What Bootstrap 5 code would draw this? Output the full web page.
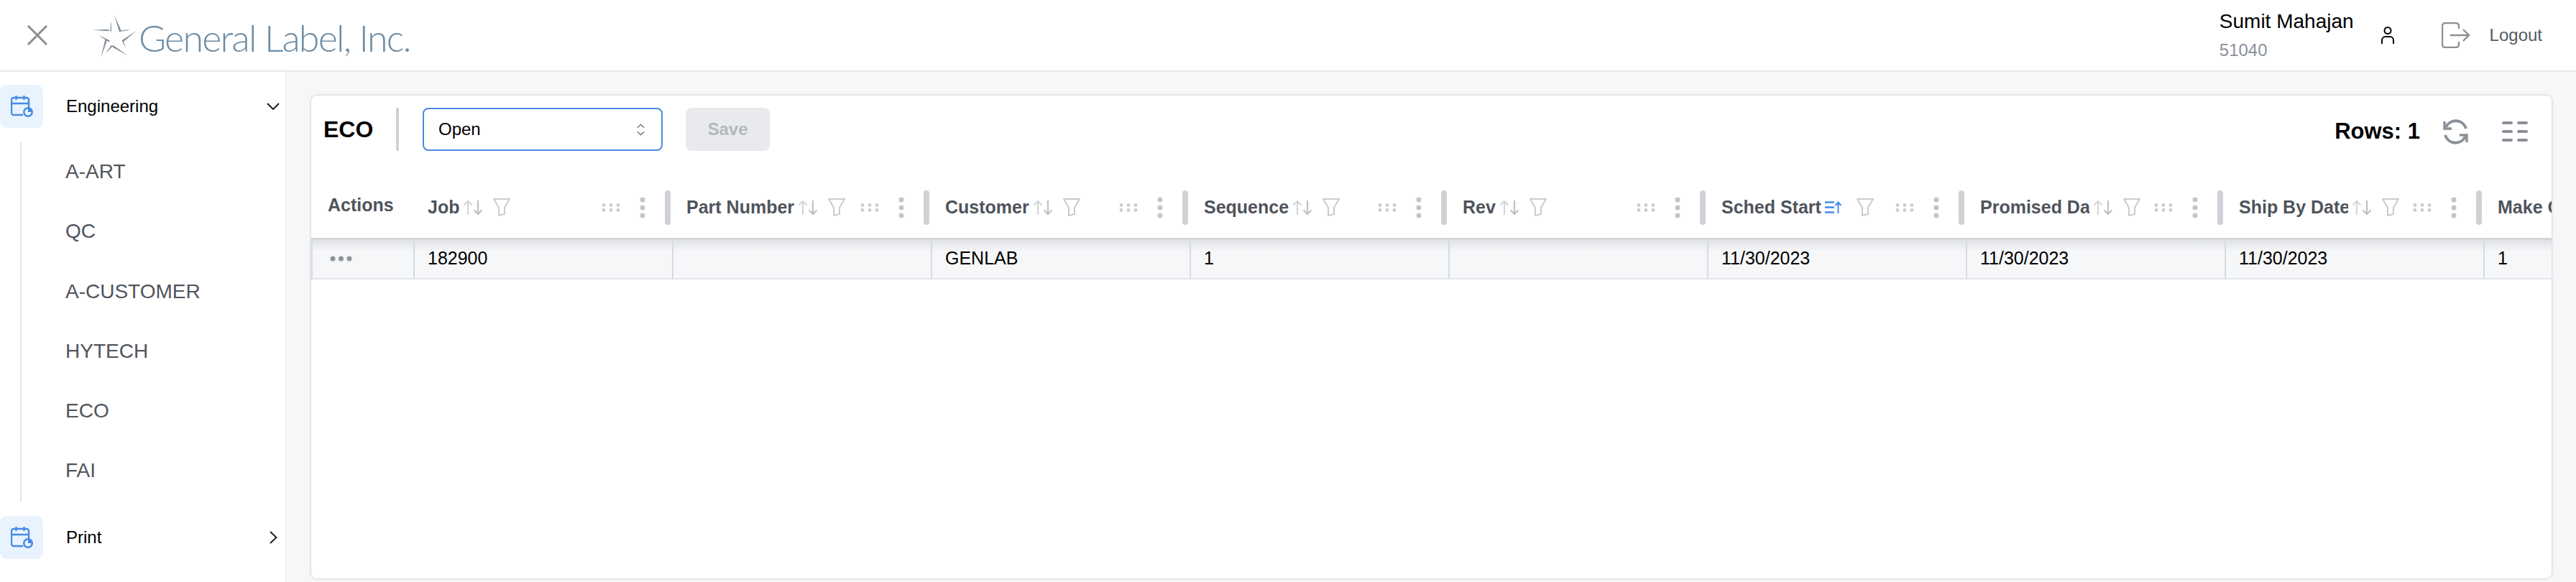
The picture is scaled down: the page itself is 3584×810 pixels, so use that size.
<!DOCTYPE html>
<html lang="en">
<head>
  <meta charset="UTF-8" />
  <title>ECO</title>
  <link href="https://cdn.jsdelivr.net/npm/bootstrap@5.3.3/dist/css/bootstrap.min.css" rel="stylesheet"/>
  <style>
    html, body { height: 810px; overflow: hidden; }
    body { font-family: "Liberation Sans", Arial, sans-serif; color: #000; background: #f6f7f9; }
    svg { display: block; flex: none; }
    .icon-defs { position: absolute; width: 0; height: 0; }

    .top-bar { height: 100px; background: #fff; border-bottom: 2px solid #e6eaee; padding: 0 47px 0 38px; }
    .logo-name { font-family: Lato, "Open Sans", sans-serif; font-weight: 300; font-size: 52px; line-height: 1; color: #6b8ca6; letter-spacing: -1.8px; margin: 5px 0 0 3px; white-space: nowrap; }
    .logo-star { margin-left: 62px; }
    .user-box { margin-right: 30px; }
    .user-name { font-size: 28px; line-height: 32px; }
    .user-id { font-size: 24px; line-height: 28px; color: #8b9199; margin-top: 10px; }
    .logout-icon { margin-left: 66px; }
    .logout-text { font-size: 24px; color: #555b63; margin-left: 27px; }

    .main-row { height: 710px; }
    .side-menu { width: 399px; background: #fff; border-right: 2px solid #eef0f3; padding-top: 18px; }
    .menu-head { height: 60px; font-size: 24px; padding-right: 8px; }
    .menu-tile { width: 60px; height: 60px; background: #e9f3fd; border-radius: 9px; margin-right: 32px; }
    .print-arrow { margin-right: 3px; }
    .menu-sub { margin: 20px 0 20px 28px; border-left: 2px solid #e2e5e9; height: 500px; padding-left: 61px; }
    .menu-sub a { display: block; height: 83.3px; line-height: 82px; font-size: 28px; color: #50555d; text-decoration: none; }

    .page-body { padding: 33px 34px 5px 34px; min-width: 0; }
    .grid-card { height: 672px; background: #fff; border: 0; border-radius: 8px; box-shadow: 0 0 3px 1px rgba(0, 0, 0, .14); overflow: hidden; }
    .tool-row { height: 77px; padding: 17px 32px 0 17px; }
    .grid-title { font-size: 32px; font-weight: 700; line-height: 60px; width: 101px; }
    .title-rule { width: 4px; height: 60px; background: #cfd3d8; margin-right: 33px; }
    .status-select { width: 334px; height: 60px; border: 2px solid #4a8be0; border-radius: 8px; font-size: 24px; color: #000; padding: 0 20px;
      background-image: url("data:image/svg+xml,%3csvg xmlns='http://www.w3.org/2000/svg' viewBox='0 0 12 18'%3e%3cpath fill='none' stroke='%23777' stroke-width='1.500' d='M1 6l5-5 5 5M1 12l5 5 5-5'/%3e%3c/svg%3e");
      background-position: right 23px center; background-size: 11px 17px; }
    .save-btn { width: 117px; height: 60px; margin-left: 32px; font-size: 24px; font-weight: 700; border: 0; border-radius: 8px; padding: 0; }
    .save-btn:disabled { color: #b3b8be; background: #e8eaed; opacity: 1; }
    .rows-box { height: 66px; }
    .rows-label { font-size: 31px; font-weight: 700; margin-right: 31px; }
    .refresh-icon { margin-right: 46px; }

    .job-grid { table-layout: fixed; width: 3382px; margin: 0; border-collapse: separate; border-spacing: 0; }
    .col-first { width: 142px; }
    .col-std { width: 360px; }
    .job-grid th, .job-grid td { padding: 0; border: 0; background: none; box-shadow: none; }
    .job-grid th { height: 121px; vertical-align: middle; padding-top: 36px; font-size: 25px; color: #4f545c; }
    .head-cell { display: flex; align-items: center; height: 48px; padding-left: 20px; padding-right: 2px; }
    .head-label { max-width: 152px; overflow: hidden; white-space: nowrap; margin-right: 5px; }
    .head-sort { margin-right: 14px; }
    .head-sort-on { margin-right: 21px; }
    .head-end { margin-left: auto; display: flex; align-items: center; }
    .head-kebab { margin-left: 27px; margin-right: 27px; }
    .head-rule { width: 8px; height: 48px; border-radius: 4px; background: #ced2d6; }
    .job-grid td { height: 58px; font-size: 25px; padding: 0 0 2px 18px; color: #000; vertical-align: middle; white-space: nowrap; overflow: hidden;
      background: linear-gradient(#e0e2e5, #f6f7f9 16px); border-top: 3px solid #d3d5d8; border-bottom: 2px solid #e4e6e9; border-left: 2px solid #d8dbdf; }
    .job-grid td.actions-cell { padding-left: 24px; }
    .job-grid th.actions-head { padding: 30px 0 0 23px; }
  </style>
</head>
<body>
  <svg class="icon-defs">
    <symbol id="ico-cal" viewBox="0 0 31 30">
      <g fill="none" stroke="#468be6" stroke-width="2.4" stroke-linecap="round" stroke-linejoin="round">
        <path d="M16 27H4a3 3 0 0 1-3-3V6a3 3 0 0 1 3-3h18a3 3 0 0 1 3 3v10"/>
        <path d="M1 11h24M7.500 1v4M18.500 1v4"/>
      </g>
      <circle cx="24" cy="23" r="7" fill="#468be6"/>
      <path d="M24 18.500V23h4.500a4.500 4.500 0 1 1-4.500-4.500z" fill="#e9f3fd"/>
    </symbol>
    <symbol id="ico-sort" viewBox="0 0 28 22">
      <path d="M7 21V2M1.500 7.500 7 2l5.500 5.500" fill="none" stroke="#d3d6da" stroke-width="2.200"/>
      <path d="M21 1v19M15.500 14.500 21 20l5.500-5.500" fill="none" stroke="#bcc1c6" stroke-width="2.200"/>
    </symbol>
    <symbol id="ico-sort-on" viewBox="0 0 23 17">
      <path d="M0 1.500h13M0 8.500h13M0 15.500h13" fill="none" stroke="#468be6" stroke-width="2.400"/>
      <path d="M18.500 17V2M14.500 6l4-4.500 4 4.500" fill="none" stroke="#468be6" stroke-width="2"/>
    </symbol>
    <symbol id="ico-filter" viewBox="0 0 24 25">
      <path d="M1 1h22L16 13v9l-8 2V13z" fill="none" stroke="#c8ccd0" stroke-width="2" stroke-linejoin="round"/>
    </symbol>
    <symbol id="ico-dots" viewBox="0 0 26 12" fill="#c9cdd1">
      <circle cx="3" cy="2.500" r="2.400"/><circle cx="13" cy="2.500" r="2.400"/><circle cx="23" cy="2.500" r="2.400"/>
      <circle cx="3" cy="9.500" r="2.400"/><circle cx="13" cy="9.500" r="2.400"/><circle cx="23" cy="9.500" r="2.400"/>
    </symbol>
    <symbol id="ico-kebab" viewBox="0 0 8 30" fill="#c2c6cb">
      <circle cx="4" cy="4" r="3.500"/><circle cx="4" cy="15" r="3.500"/><circle cx="4" cy="26" r="3.500"/>
    </symbol>
  </svg>

  <header class="top-bar d-flex align-items-center">
    <svg width="28" height="28" viewBox="0 0 28 28"><path d="M1 1l26 26M27 1 1 27" stroke="#8a8d91" stroke-width="3" fill="none"/></svg>
    <svg class="logo-star" width="62" height="58" viewBox="55 28 186 174" fill="#7f8b97">
      <path d="M55 93 122 91l5 3-5 4zM130 98l5-38 1 0-1 40zM148 30 177 96l-6 6-3-4zM170 96 210 92v2l-34 5zM241 96 186 143l-6-5 2-3zM180 138l5 0 13 33zM206 201 144 167l-6-6 6-3zM142 160 115 188l-1-1 22-31zM80 114 127 136l2 5-4 2zM118 135l-23 66-1 0 16-68z"/>
    </svg>
    <span class="logo-name">General Label, Inc.</span>

    <div class="ms-auto d-flex align-items-center">
      <div class="user-box">
        <div class="user-name">Sumit Mahajan</div>
        <div class="user-id">51040</div>
      </div>
      <svg class="ms-2" width="18" height="24" viewBox="0 0 18 24"><circle cx="9" cy="5.500" r="4.500" fill="none" stroke="#000" stroke-width="2"/><path d="M1 24v-5a5 5 0 0 1 5-5h6a5 5 0 0 1 5 5v5" fill="none" stroke="#000" stroke-width="2"/></svg>
      <svg class="logout-icon" width="40" height="36" viewBox="0 0 40 36"><path d="M24 9V5a4 4 0 0 0-4-4H5a4 4 0 0 0-4 4v26a4 4 0 0 0 4 4h15a4 4 0 0 0 4-4v-4" fill="none" stroke="#8a9097" stroke-width="2.400"/><path d="M12 18h26M30 10l8 8-8 8" fill="none" stroke="#8a9097" stroke-width="2.400"/></svg>
      <span class="logout-text">Logout</span>
    </div>
  </header>

  <div class="d-flex main-row">
    <nav class="side-menu flex-shrink-0">
      <div class="menu-head d-flex align-items-center">
        <div class="menu-tile d-flex align-items-center justify-content-center"><svg width="31" height="30"><use href="#ico-cal"/></svg></div>
        <span>Engineering</span>
        <svg class="ms-auto" width="18" height="10" viewBox="0 0 18 10"><path d="M1 1l8 8 8-8" fill="none" stroke="#222" stroke-width="2"/></svg>
      </div>
      <div class="menu-sub">
        <a href="#">A-ART</a>
        <a href="#">QC</a>
        <a href="#">A-CUSTOMER</a>
        <a href="#">HYTECH</a>
        <a href="#">ECO</a>
        <a href="#">FAI</a>
      </div>
      <div class="menu-head d-flex align-items-center">
        <div class="menu-tile d-flex align-items-center justify-content-center"><svg width="31" height="30"><use href="#ico-cal"/></svg></div>
        <span>Print</span>
        <svg class="ms-auto print-arrow" width="11" height="18" viewBox="0 0 11 18"><path d="M1 1l8.500 8L1 17" fill="none" stroke="#222" stroke-width="2"/></svg>
      </div>
    </nav>

    <main class="page-body flex-grow-1">
      <div class="card grid-card">
        <div class="tool-row d-flex align-items-start">
          <div class="grid-title">ECO</div>
          <div class="title-rule"></div>
          <select class="form-select status-select"><option>Open</option></select>
          <button class="btn save-btn" disabled>Save</button>
          <div class="ms-auto d-flex align-items-center rows-box">
            <span class="rows-label">Rows: 1</span>
            <svg class="refresh-icon" width="37" height="37" viewBox="0 0 37 37" fill="none" stroke="#8a9097" stroke-width="4">
              <path d="M5 12A15 15 0 0 1 33 14"/><path d="M32 25A15 15 0 0 1 4 23"/>
              <path d="M3 4v10h10" stroke-width="3.400"/><path d="M34 33V23H24" stroke-width="3.400"/>
            </svg>
            <svg width="37" height="28" viewBox="0 0 37 28" fill="#8a9097">
              <rect x="0" y="0" width="15" height="4" rx="2"/><rect x="21" y="0" width="15" height="4" rx="2"/>
              <rect x="0" y="12" width="15" height="4" rx="2"/><rect x="21" y="12" width="15" height="4" rx="2"/>
              <rect x="0" y="24" width="15" height="4" rx="2"/><rect x="21" y="24" width="15" height="4" rx="2"/>
            </svg>
          </div>
        </div>

        <table class="table job-grid">
          <colgroup>
            <col class="col-first"/><col class="col-std" span="9"/>
          </colgroup>
          <thead>
            <tr>
              <th class="actions-head">Actions</th>
              <th><div class="head-cell"><span class="head-label">Job</span><svg class="head-sort" width="28" height="22"><use href="#ico-sort"/></svg><svg width="24" height="25"><use href="#ico-filter"/></svg><div class="head-end"><svg width="26" height="12"><use href="#ico-dots"/></svg><svg class="head-kebab" width="8" height="30"><use href="#ico-kebab"/></svg><div class="head-rule"></div></div></div></th>
              <th><div class="head-cell"><span class="head-label">Part Number</span><svg class="head-sort" width="28" height="22"><use href="#ico-sort"/></svg><svg width="24" height="25"><use href="#ico-filter"/></svg><div class="head-end"><svg width="26" height="12"><use href="#ico-dots"/></svg><svg class="head-kebab" width="8" height="30"><use href="#ico-kebab"/></svg><div class="head-rule"></div></div></div></th>
              <th><div class="head-cell"><span class="head-label">Customer</span><svg class="head-sort" width="28" height="22"><use href="#ico-sort"/></svg><svg width="24" height="25"><use href="#ico-filter"/></svg><div class="head-end"><svg width="26" height="12"><use href="#ico-dots"/></svg><svg class="head-kebab" width="8" height="30"><use href="#ico-kebab"/></svg><div class="head-rule"></div></div></div></th>
              <th><div class="head-cell"><span class="head-label">Sequence</span><svg class="head-sort" width="28" height="22"><use href="#ico-sort"/></svg><svg width="24" height="25"><use href="#ico-filter"/></svg><div class="head-end"><svg width="26" height="12"><use href="#ico-dots"/></svg><svg class="head-kebab" width="8" height="30"><use href="#ico-kebab"/></svg><div class="head-rule"></div></div></div></th>
              <th><div class="head-cell"><span class="head-label">Rev</span><svg class="head-sort" width="28" height="22"><use href="#ico-sort"/></svg><svg width="24" height="25"><use href="#ico-filter"/></svg><div class="head-end"><svg width="26" height="12"><use href="#ico-dots"/></svg><svg class="head-kebab" width="8" height="30"><use href="#ico-kebab"/></svg><div class="head-rule"></div></div></div></th>
              <th><div class="head-cell"><span class="head-label">Sched Start</span><svg class="head-sort-on" width="23" height="17"><use href="#ico-sort-on"/></svg><svg width="24" height="25"><use href="#ico-filter"/></svg><div class="head-end"><svg width="26" height="12"><use href="#ico-dots"/></svg><svg class="head-kebab" width="8" height="30"><use href="#ico-kebab"/></svg><div class="head-rule"></div></div></div></th>
              <th><div class="head-cell"><span class="head-label">Promised Date</span><svg class="head-sort" width="28" height="22"><use href="#ico-sort"/></svg><svg width="24" height="25"><use href="#ico-filter"/></svg><div class="head-end"><svg width="26" height="12"><use href="#ico-dots"/></svg><svg class="head-kebab" width="8" height="30"><use href="#ico-kebab"/></svg><div class="head-rule"></div></div></div></th>
              <th><div class="head-cell"><span class="head-label">Ship By Date</span><svg class="head-sort" width="28" height="22"><use href="#ico-sort"/></svg><svg width="24" height="25"><use href="#ico-filter"/></svg><div class="head-end"><svg width="26" height="12"><use href="#ico-dots"/></svg><svg class="head-kebab" width="8" height="30"><use href="#ico-kebab"/></svg><div class="head-rule"></div></div></div></th>
              <th><div class="head-cell"><span class="head-label">Make Qty</span></div></th>
            </tr>
          </thead>
          <tbody>
            <tr>
              <td class="actions-cell"><svg width="31" height="8" viewBox="0 0 31 8" fill="#8f949b"><circle cx="4" cy="4" r="3.500"/><circle cx="15.500" cy="4" r="3.500"/><circle cx="27" cy="4" r="3.500"/></svg></td>
              <td>182900</td>
              <td></td>
              <td>GENLAB</td>
              <td>1</td>
              <td></td>
              <td>11/30/2023</td>
              <td>11/30/2023</td>
              <td>11/30/2023</td>
              <td>1</td>
            </tr>
          </tbody>
        </table>
      </div>
    </main>
  </div>

  <script src="https://cdn.jsdelivr.net/npm/bootstrap@5.3.3/dist/js/bootstrap.bundle.min.js"></script>
</body>
</html>
